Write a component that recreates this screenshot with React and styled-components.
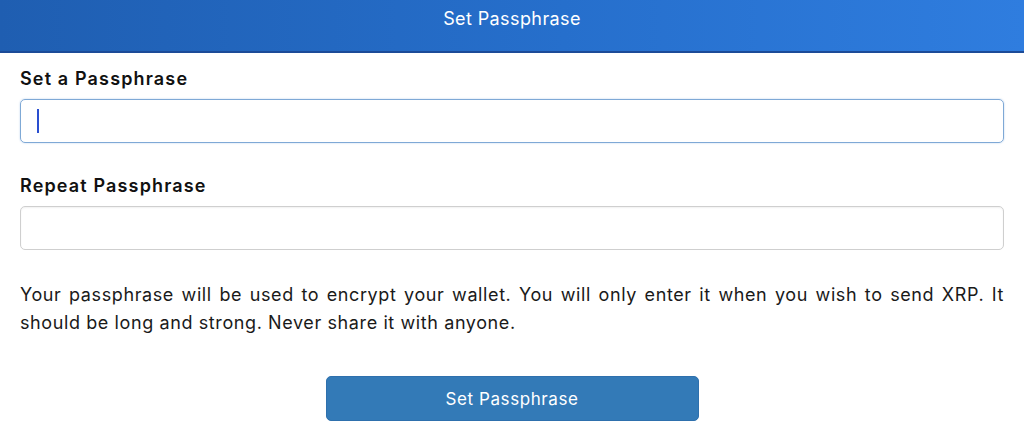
import React from "react";
import styled, { createGlobalStyle } from "styled-components";

const Global = createGlobalStyle`
  html, body { margin: 0; padding: 0; background: #fff; }
  body { font-family: Inter, "Noto Sans", sans-serif; color: #1a1a1a; }
  * { box-sizing: border-box; }
`;

const Page = styled.div`
  width: 1024px;
  height: 433px;
  display: flex;
  flex-direction: column;
  overflow: hidden;
`;

const Header = styled.header`
  height: 53px;
  flex: none;
  background: linear-gradient(90deg, #1f5eb1 0%, #266fcc 55%, #2f7ddf 100%);
  border-bottom: 2px solid #1c4b98;
  display: flex;
  justify-content: center;
  padding-top: 7px;
  color: #fff;
  font-size: 18px;
  letter-spacing: 0.4px;
  line-height: 24px;
`;

const Body = styled.main`
  padding: 14px 20px 0 20px;
  display: flex;
  flex-direction: column;
`;

const Label = styled.label`
  font-weight: 600;
  font-size: 18px;
  letter-spacing: 1.15px;
  line-height: 24px;
  margin-bottom: 8px;
  color: #111;
`;

const Input = styled.input`
  height: 44px;
  width: 100%;
  border-radius: 5px;
  border: 1px solid #cfcfcf;
  box-shadow: inset 0 1px 2px rgba(0, 0, 0, 0.06);
  padding: 0 16px;
  font-size: 17px;
  outline: none;
  margin-bottom: 31px;
`;

const Caret = styled.span`
  display: block;
  width: 2px;
  height: 24px;
  background: #2a4fd0;
`;

const FieldBox = styled.div`
  height: 44px;
  width: 100%;
  border-radius: 5px;
  border: 1px solid #7fa9d6;
  box-shadow: 0 0 2px rgba(80, 140, 210, 0.4);
  padding: 0 16px;
  display: flex;
  align-items: center;
  margin-bottom: 31px;
`;

const Text = styled.p`
  margin: 0;
  font-size: 18px;
  letter-spacing: 0.6px;
  line-height: 28px;
  text-align: justify;
  color: #1a1a1a;
`;

const ButtonRow = styled.div`
  display: flex;
  justify-content: center;
  margin-top: 39px;
`;

const Button = styled.button`
  width: 373px;
  height: 45px;
  background: #337ab7;
  border: 1px solid #2e70ad;
  border-radius: 5px;
  color: #fff;
  font-family: inherit;
  font-size: 17px;
  letter-spacing: 0.6px;
`;

export default function App() {
  return (
    <Page>
      <Global />
      <Header>Set Passphrase</Header>
      <Body>
        <Label>Set a Passphrase</Label>
        <FieldBox>
          <Caret />
        </FieldBox>
        <Label>Repeat Passphrase</Label>
        <Input type="password" />
        <Text>
          Your passphrase will be used to encrypt your wallet. You will only enter it when you wish to send XRP. It
          should be long and strong. Never share it with anyone.
        </Text>
        <ButtonRow>
          <Button>Set Passphrase</Button>
        </ButtonRow>
      </Body>
    </Page>
  );
}
